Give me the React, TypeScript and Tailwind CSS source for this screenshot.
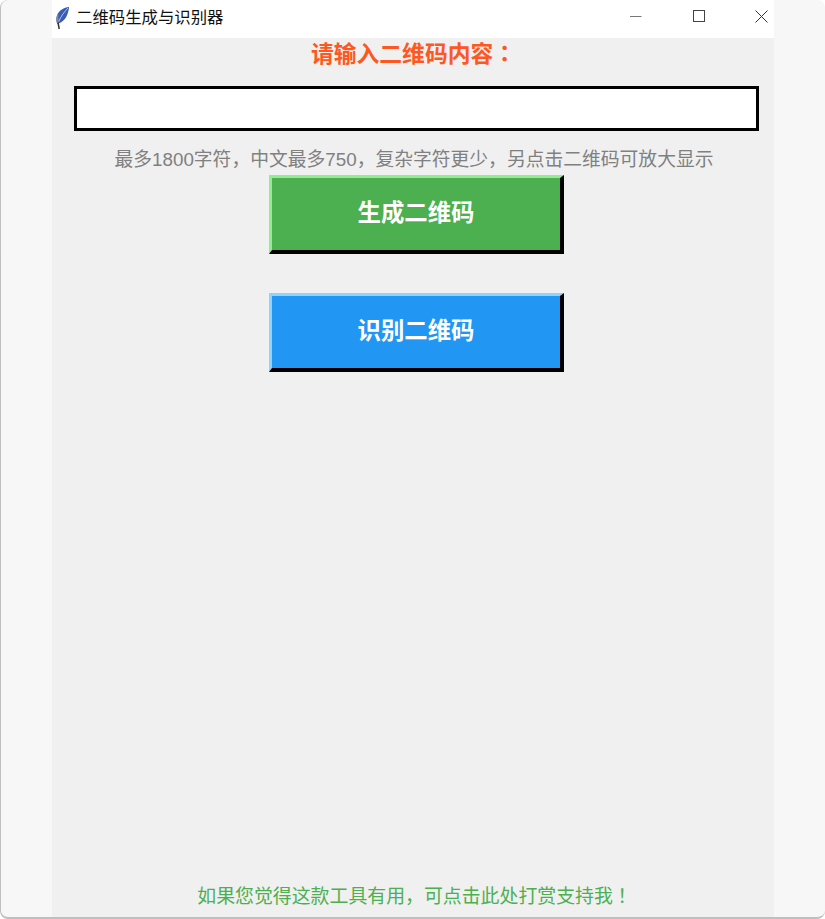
const cjkSans = 'font-["Liberation_Sans","Noto_Sans_CJK_SC",sans-serif]'
// TC has centred punctuation, like the reference
const centredMark = 'font-["Noto_Sans_CJK_TC",sans-serif]'

function Feather() {
  return (
    <svg width="16" height="24" viewBox="0 0 16 24" fill="none">
      <path d="M15 1 C10 1.5 5 4 3 9.5 C2 12.5 2 15.5 3.5 18 C8 16.5 12 13 13.5 8 C14.3 5.5 15 3.5 15 1 Z" fill="#3a5cb5" />
      <path d="M14 2 C10.5 5.5 7 10 4.5 16" stroke="#b9c9ec" strokeWidth="0.9" />
      <path d="M3 9.5 C2 12.5 2 15.5 3.5 18 L5.5 15.5 C4.5 13.5 4 11.5 4.5 8 Z" fill="#7f889e" />
      <path d="M4 16.5 L5.2 23" stroke="#2f3238" strokeWidth="1.5" />
    </svg>
  )
}

function TitleBar() {
  return (
    <div className="h-[38px] bg-white flex items-center">
      <div className="ml-[2px] w-[16px] flex justify-center -mt-[2px]">
        <Feather />
      </div>
      <span className="ml-[6px] text-[16.4px] text-[#111] -mt-[4px] whitespace-nowrap">二维码生成与识别器</span>
      <div className="ml-auto flex items-center -mt-[6px]">
        <svg width="12" height="12" viewBox="0 0 12 12" className="mr-[51px]">
          <path d="M0 6.5 H11.5" stroke="#777" strokeWidth="1" />
        </svg>
        <svg width="12" height="12" viewBox="0 0 12 12" className="mr-[50px]">
          <rect x="0.5" y="0.5" width="11" height="11" fill="none" stroke="#444" strokeWidth="1" />
        </svg>
        <svg width="13" height="13" viewBox="0 0 13 13" className="mr-[6px]">
          <path d="M0.5 0.5 L12.5 12.5 M12.5 0.5 L0.5 12.5" stroke="#333" strokeWidth="1" />
        </svg>
      </div>
    </div>
  )
}

function BevelButton({ label, className }: { label: string; className: string }) {
  return (
    <button
      className={`w-[295px] h-[79px] border-t-[3px] border-l-[3px] border-r-[4px] border-b-[4px] border-r-black border-b-black flex items-center justify-center text-white text-[23.4px] font-bold font-["Liberation_Serif","Noto_Sans_CJK_SC",serif] ${className}`}
    >
      {label}
    </button>
  )
}

export default function App() {
  return (
    <div className={`w-[825px] h-[919px] bg-[#f7f7f7] overflow-hidden rounded-[8px] border-b-2 border-l border-[#999]/60 ${cjkSans}`}>
      <div className="ml-[51px] w-[722px] h-full flex flex-col bg-[#f0f0f0]">
        <TitleBar />
        <div className="flex-1 flex flex-col items-center">
          <h1 className="mt-[1px] h-[28px] leading-[28px] text-[22.8px] font-bold text-[#ff5722] whitespace-nowrap ml-[1px]">
            请输入二维码内容<span className={centredMark}>：</span>
          </h1>
          <input className="mt-[19px] ml-[6px] w-[685px] h-[45px] bg-white border-[3px] border-black outline-none" />
          <p className="mt-[17px] ml-[2px] h-[24px] leading-[24px] text-[18.8px] text-[#808080] whitespace-nowrap">
            最多1800字符，中文最多750，复杂字符更少，另点击二维码可放大显示
          </p>
          <div className="mt-[3px] ml-[7px] flex flex-col gap-[39px]">
            <BevelButton label="生成二维码" className="bg-[#4caf50] border-t-[#90ee90] border-l-[#90ee90]" />
            <BevelButton label="识别二维码" className="bg-[#2196f3] border-t-[#90d4fc] border-l-[#90d4fc]" />
          </div>
          <p className="mt-auto mb-[10px] ml-[3px] h-[24px] leading-[24px] text-[18.9px] text-[#4caf50] whitespace-nowrap">
            如果您觉得这款工具有用，可点击此处打赏支持我<span className={centredMark}>！</span>
          </p>
        </div>
      </div>
    </div>
  )
}
